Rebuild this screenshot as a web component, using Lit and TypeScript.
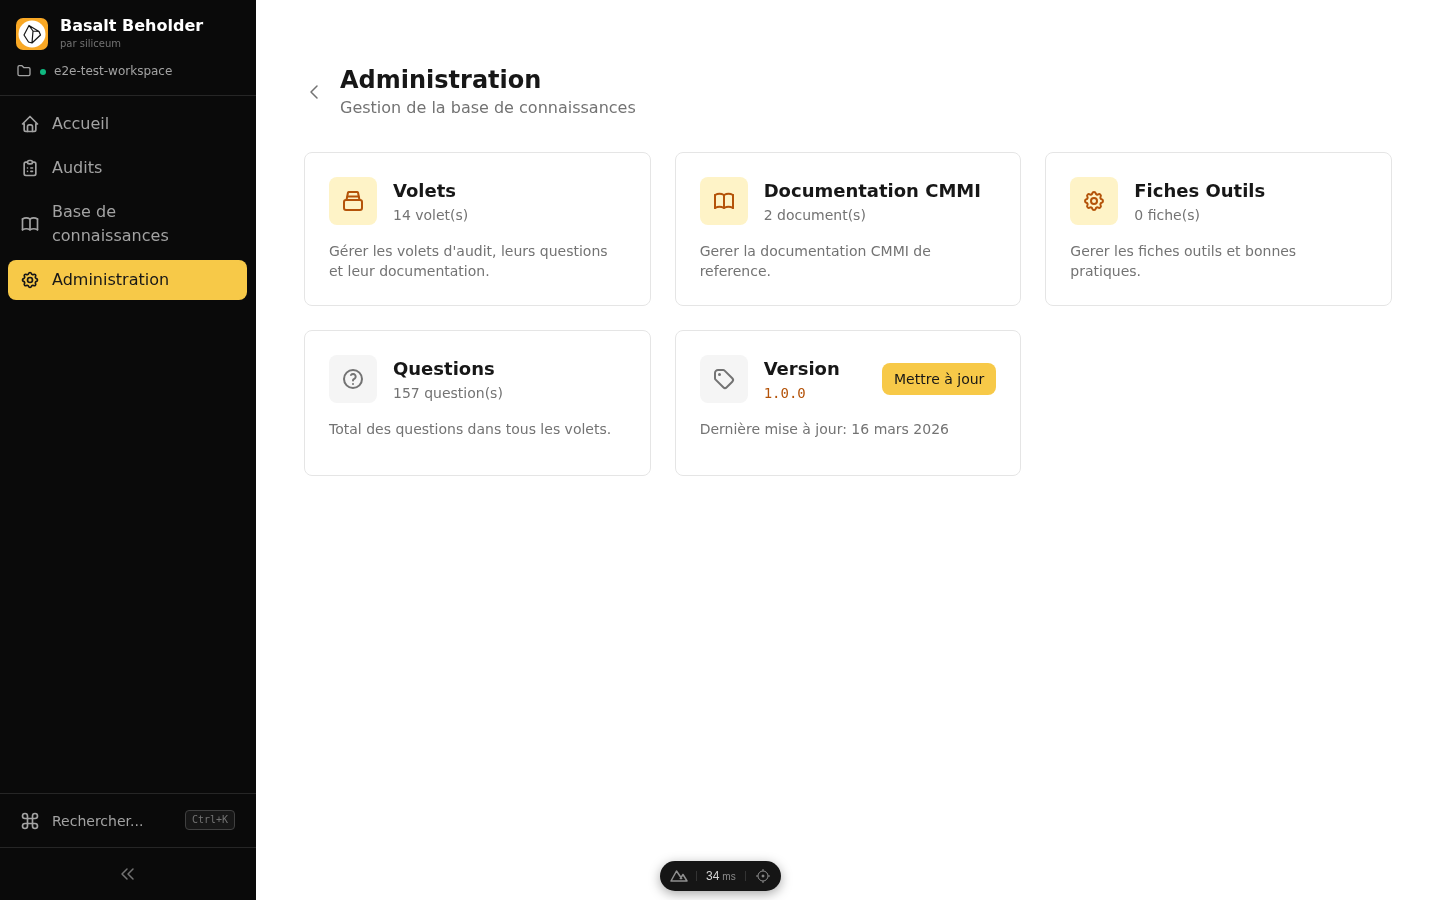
import { LitElement, html, css, svg } from "lit";
import { customElement } from "lit/decorators.js";

const icons: Record<string, unknown> = {
  home: svg`<path d="M5 12l-2 0l9 -9l9 9l-2 0"/><path d="M5 12v7a2 2 0 0 0 2 2h10a2 2 0 0 0 2 -2v-7"/><path d="M9 21v-6a2 2 0 0 1 2 -2h2a2 2 0 0 1 2 2v6"/>`,
  clip: svg`<path d="M9 5h-2a2 2 0 0 0 -2 2v12a2 2 0 0 0 2 2h10a2 2 0 0 0 2 -2v-12a2 2 0 0 0 -2 -2h-2"/><path d="M9 3m0 2a2 2 0 0 1 2 -2h2a2 2 0 0 1 2 2v0a2 2 0 0 1 -2 2h-2a2 2 0 0 1 -2 -2z"/><path d="M9 12l.01 0"/><path d="M13 12l2 0"/><path d="M9 16l.01 0"/><path d="M13 16l2 0"/>`,
  book: svg`<path d="M3 19a9 9 0 0 1 9 0a9 9 0 0 1 9 0"/><path d="M3 6a9 9 0 0 1 9 0a9 9 0 0 1 9 0"/><path d="M3 6l0 13"/><path d="M12 6l0 13"/><path d="M21 6l0 13"/>`,
  gear: svg`<path d="M10.325 4.317c.426 -1.756 2.924 -1.756 3.35 0a1.724 1.724 0 0 0 2.573 1.066c1.543 -.94 3.31 .826 2.37 2.37a1.724 1.724 0 0 0 1.065 2.572c1.756 .426 1.756 2.924 0 3.35a1.724 1.724 0 0 0 -1.066 2.573c.94 1.543 -.826 3.31 -2.37 2.37a1.724 1.724 0 0 0 -2.572 1.065c-.426 1.756 -2.924 1.756 -3.35 0a1.724 1.724 0 0 0 -2.573 -1.066c-1.543 .94 -3.31 -.826 -2.37 -2.37a1.724 1.724 0 0 0 -1.065 -2.572c-1.756 -.426 -1.756 -2.924 0 -3.35a1.724 1.724 0 0 0 1.066 -2.573c-.94 -1.543 .826 -3.31 2.37 -2.37c1 .608 2.296 .07 2.572 -1.065z"/><circle cx="12" cy="12" r="3"/>`,
  folder: svg`<path d="M5 4h4l3 3h7a2 2 0 0 1 2 2v8a2 2 0 0 1 -2 2h-14a2 2 0 0 1 -2 -2v-11a2 2 0 0 1 2 -2"/>`,
  command: svg`<path d="M15 6v12a3 3 0 1 0 3-3H6a3 3 0 1 0 3 3V6a3 3 0 1 0-3 3h12a3 3 0 1 0-3-3"/>`,
  chevrons: svg`<path d="M11 7l-5 5l5 5"/><path d="M17 7l-5 5l5 5"/>`,
  back: svg`<path d="M15 6l-6 6l6 6"/>`,
  help: svg`<path d="M3 12a9 9 0 1 0 18 0a9 9 0 0 0 -18 0"/><path d="M12 17l0 .01"/><path d="M12 13.5a1.5 1.5 0 0 1 1 -1.5a2.6 2.6 0 1 0 -3 -4"/>`,
  tag: svg`<path d="M7.5 7.5m-.5 0a.5 .5 0 1 0 1 0a.5 .5 0 1 0 -1 0"/><path d="M3 6v5.172a2 2 0 0 0 .586 1.414l7.71 7.71a2.41 2.41 0 0 0 3.408 0l5.592 -5.592a2.41 2.41 0 0 0 0 -3.408l-7.71 -7.71a2 2 0 0 0 -1.414 -.586h-5.172a3 3 0 0 0 -3 3z"/>`,
  stack: svg`<rect x="3" y="11" width="18" height="10" rx="2"/><path d="M5.5 11l1.5-7.5a1 1 0 0 1 1-.5h8a1 1 0 0 1 1 .5L18.500 11"/><path d="M6.500 7.500h11"/>`,
};

const icon = (name: string, size = 20, sw = 2) =>
  html`<svg class="ic" width=${size} height=${size} viewBox="0 0 24 24" fill="none" stroke="currentColor" stroke-width=${sw} stroke-linecap="round" stroke-linejoin="round">${icons[name]}</svg>`;

@customElement("app-root")
export class AppRoot extends LitElement {
  static styles = css`
    :host {
      display: flex;
      height: 100vh;
      overflow: hidden;
      font-family: "DejaVu Sans", sans-serif;
      color: #171717;
      background: #fff;
    }
    .ic { display: block; flex: none; }
    .side {
      width: 256px;
      flex: none;
      box-sizing: border-box;
      background: #0a0a0a;
      border-right: 1px solid #0a0a0a;
      display: flex;
      flex-direction: column;
    }
    .brand {
      height: 96px;
      box-sizing: border-box;
      border-bottom: 1px solid #262626;
      margin-right: -1px;
      padding: 14px 16px 0;
      will-change: transform;
    }
    .brand-row { display: flex; align-items: center; gap: 12px; height: 40px; }
    .brand-text { padding-bottom: 2px; }
    .logo { display: block; flex: none; }
    .brand-name { font-size: 16px; font-weight: 700; line-height: 22px; color: #fff; }
    .brand-by { font-size: 10px; line-height: 14px; color: #737373; }
    .ws { display: flex; align-items: center; margin-top: 7px; height: 20px; font-size: 12px; color: #a3a3a3; }
    .ws .ic { color: #a3a3a3; }
    .dot { width: 6px; height: 6px; border-radius: 50%; background: #10b981; margin: 1px 8px 0 8px; }
    nav { padding: 8px; display: flex; flex-direction: column; gap: 4px; flex: 1; will-change: transform; }
    .item {
      display: flex;
      align-items: center;
      gap: 12px;
      padding: 8px 12px;
      border-radius: 8px;
      font-size: 16px;
      line-height: 24px;
      color: #a3a3a3;
    }
    .item.on { background: #f7c948; color: #171717; }
    .search {
      height: 54px;
      box-sizing: border-box;
      border-top: 1px solid #262626;
      margin-right: -1px;
      display: flex;
      align-items: center;
      padding: 0 21px 0 20px;
      gap: 12px;
      font-size: 14px;
      color: #a3a3a3;
      will-change: transform;
    }
    .search span { flex: 1; }
    kbd {
      font-family: "DejaVu Sans Mono", monospace;
      font-size: 10px;
      line-height: 14px;
      color: #737373;
      background: #171717;
      border: 1px solid #404040;
      border-radius: 4px;
      padding: 2px 6px;
      margin-top: -2px;
    }
    .collapse {
      height: 53px;
      box-sizing: border-box;
      border-top: 1px solid #262626;
      margin-right: -1px;
      display: flex;
      align-items: center;
      justify-content: center;
      color: #737373;
    }
    main { flex: 1; min-width: 0; padding: 64px 48px 0; will-change: transform; }
    header { display: flex; align-items: center; gap: 14px; margin-bottom: 32px; }
    header .ic { color: #737373; margin-left: -2px; }
    h1 { margin: 0; font-size: 24px; line-height: 32px; font-weight: 700; color: #171717; }
    .sub { font-size: 16px; line-height: 24px; color: #737373; }
    .grid { display: grid; grid-template-columns: repeat(3, 1fr); gap: 24px; }
    .card {
      border: 1px solid #e5e5e5;
      border-radius: 8px;
      padding: 24px;
    }
    .top { display: flex; align-items: center; gap: 16px; }
    .tile {
      width: 48px;
      height: 48px;
      flex: none;
      border-radius: 8px;
      display: flex;
      align-items: center;
      justify-content: center;
    }
    .tile.amber { background: #fef3c7; color: #b45309; }
    .tile.gray { background: #f5f5f5; color: #737373; }
    .txt { flex: 1; min-width: 0; }
    .t { font-size: 18px; line-height: 28px; font-weight: 700; color: #171717; }
    .c { font-size: 14px; line-height: 20px; color: #737373; }
    .c.mono { font-family: "DejaVu Sans Mono", monospace; color: #b45309; }
    .d { margin: 16px 0 0; font-size: 14px; line-height: 20px; color: #737373; }
    .spacer { height: 12px; }
    button {
      font: inherit;
      font-size: 14px;
      line-height: 20px;
      color: #171717;
      background: #f7c948;
      border: 0;
      border-radius: 8px;
      padding: 6px 12px;
    }
    .dev {
      position: fixed;
      left: 660px;
      top: 861px;
      width: 121px;
      height: 30px;
      box-sizing: border-box;
      border-radius: 15px;
      background: #151515;
      box-shadow: 0 3px 12px rgba(0, 0, 0, 0.35);
      display: flex;
      align-items: center;
      padding: 0 10px;
      font-family: "Liberation Sans", sans-serif;
      color: #d4d4d4;
      font-size: 12px;
    }
    .dev .sep { width: 1px; height: 10px; background: #333; margin: 0 9px; flex: none; }
    .dev .sep.first { margin-left: 8px; }
    .dev small { font-size: 10px; color: #8a8a8a; margin-left: 3px; }
    .dev .num { white-space: nowrap; }
    .dev svg { display: block; flex: none; color: #8f8f8f; }
  `;

  private cards = [
    { i: "stack", a: true, t: "Volets", c: "14 volet(s)", d: "Gérer les volets d'audit, leurs questions et leur documentation." },
    { i: "book", a: true, t: "Documentation CMMI", c: "2 document(s)", d: "Gerer la documentation CMMI de reference." },
    { i: "gear", a: true, t: "Fiches Outils", c: "0 fiche(s)", d: "Gerer les fiches outils et bonnes pratiques." },
    { i: "help", a: false, t: "Questions", c: "157 question(s)", d: "Total des questions dans tous les volets." },
  ];

  render() {
    return html`
      <aside class="side">
        <div class="brand">
          <div class="brand-row">
            <svg class="logo" width="32" height="32" viewBox="0 0 32 32">
              <rect width="32" height="32" rx="7" fill="#f9a825"/>
              <circle cx="16" cy="16" r="13.500" fill="#fff"/>
              <path d="M8 17 13 7.500 23 13.500 24.500 17 16 25 12.500 24zM13 7.500l4 5.500-1 12M17 13l6 .500" fill="none" stroke="#171717" stroke-width="1.200" stroke-linejoin="round"/>
            </svg>
            <div class="brand-text">
              <div class="brand-name">Basalt Beholder</div>
              <div class="brand-by">par siliceum</div>
            </div>
          </div>
          <div class="ws">${icon("folder", 16, 2)}<i class="dot"></i>e2e-test-workspace</div>
        </div>
        <nav>
          <div class="item">${icon("home")}<span>Accueil</span></div>
          <div class="item">${icon("clip")}<span>Audits</span></div>
          <div class="item">${icon("book")}<span>Base de connaissances</span></div>
          <div class="item on">${icon("gear")}<span>Administration</span></div>
        </nav>
        <div class="search">${icon("command")}<span>Rechercher...</span><kbd>Ctrl+K</kbd></div>
        <div class="collapse">${icon("chevrons", 24, 1.5)}</div>
      </aside>
      <main>
        <header>
          ${icon("back", 24, 1.5)}
          <div>
            <h1>Administration</h1>
            <div class="sub">Gestion de la base de connaissances</div>
          </div>
        </header>
        <div class="grid">
          ${this.cards.map(
            (c) => html`<div class="card">
              <div class="top">
                <div class="tile ${c.a ? "amber" : "gray"}">${icon(c.i, 24, 2)}</div>
                <div class="txt"><div class="t">${c.t}</div><div class="c">${c.c}</div></div>
              </div>
              <p class="d">${c.d}</p>
            </div>`
          )}
          <div class="card">
            <div class="top">
              <div class="tile gray">${icon("tag", 24, 2)}</div>
              <div class="txt"><div class="t">Version</div><div class="c mono">1.0.0</div></div>
              <button>Mettre à jour</button>
            </div>
            <p class="d">Dernière mise à jour: 16 mars 2026</p>
            <div class="spacer"></div>
          </div>
        </div>
      </main>
      <div class="dev">
        <svg width="18" height="12" viewBox="0 0 18 12" fill="none" stroke="currentColor" stroke-width="1.5" stroke-linejoin="round"><path d="M12 9 6.500 1 1 11h16l-4-6.500-3 4.500"/></svg>
        <i class="sep first"></i>
        <span class="num">34<small>ms</small></span>
        <i class="sep"></i>
        <svg width="16" height="16" viewBox="0 0 16 16" fill="none" stroke="currentColor" stroke-width="1"><circle cx="8" cy="8" r="5"/><circle cx="8" cy="8" r="1" fill="currentColor"/><path d="M8 1v2M8 13v2M1 8h2M13 8h2"/></svg>
      </div>
    `;
  }
}
